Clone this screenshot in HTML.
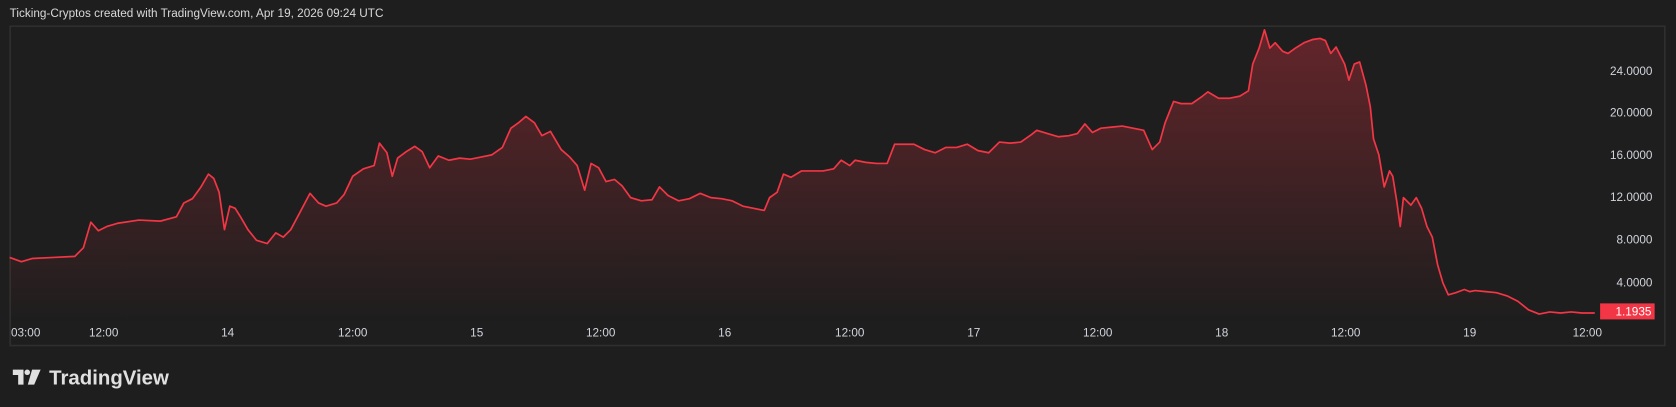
<!DOCTYPE html>
<html><head><meta charset="utf-8"><style>
html,body{margin:0;padding:0;background:#1e1e1e;overflow:hidden}
#w{width:1568px;height:381px;transform:scale(1.06888,1.06824);transform-origin:0 0;position:relative;font-family:"Liberation Sans",sans-serif;color:#d1d4dc}
.t{position:absolute;font-size:11px;color:#d9d9d9}
</style></head><body><div id="w">
<div class="t" style="left:9px;top:7px;font-size:11px">Ticking-Cryptos created with TradingView.com, Apr 19, 2026 09:24 UTC</div>
<svg width="1568" height="381" style="position:absolute;left:0;top:0">
<defs><linearGradient id="g" x1="0" y1="0" x2="0" y2="1"><stop offset="0" stop-color="#f23645" stop-opacity="0.33"/><stop offset="1" stop-color="#f23645" stop-opacity="0"/></linearGradient></defs>
<rect x="9.5" y="24.5" width="1548" height="299" fill="none" stroke="#2f2f2f" stroke-width="1.5"/>
<path id="p" fill="url(#g)" d="M9,241 L20,245 30,242 50,241 70,240 78,232 85,208 92,216 100,212 110,209 130,206 150,207 165,203 172,190 180,186 188,175 195,163 200,167 205,180 210,215 215,193 220,195 225,203 232,215 240,225 250,228 258,218 265,222 272,215 280,200 290,181 298,190 305,193 315,190 322,182 330,165 340,158 350,155 355,134 362,143 367,165 372,148 380,142 388,137 395,142 402,157 410,146 420,150 430,148 440,149 450,147 460,145 470,138 478,120 485,115 492,109 500,115 507,127 515,123 525,140 533,147 540,155 547,178 553,153 560,157 567,170 575,168 582,174 590,185 600,188 610,187 617,175 625,183 635,188 645,186 655,181 665,185 675,186 685,188 695,193 705,195 715,197 720,185 727,180 733,163 740,166 750,160 760,160 770,160 780,158 787,150 795,155 800,150 810,152 820,153 830,153 837,135 845,135 855,135 865,140 875,143 885,138 895,138 905,135 915,141 925,143 935,133 945,134 955,133 965,126 970,122 980,125 990,128 1000,127 1008,125 1015,116 1022,124 1030,120 1040,119 1050,118 1060,120 1070,122 1078,140 1085,133 1090,115 1098,95 1105,97 1115,97 1125,90 1130,86 1140,92 1150,92 1160,90 1168,85 1172,60 1178,45 1183,28 1188,45 1193,40 1200,48 1205,50 1212,45 1220,40 1228,37 1235,36 1240,38 1245,50 1250,44 1258,60 1262,75 1267,60 1272,58 1278,80 1282,100 1285,130 1290,145 1295,175 1300,160 1303,165 1307,190 1310,212 1313,185 1320,192 1325,185 1330,195 1335,212 1340,222 1345,248 1350,265 1355,276 1362,274 1370,271 1375,273 1380,272 1390,273 1400,274 1410,277 1420,282 1430,290 1440,294 1450,292 1460,293 1470,292 1480,293 1492,293 L1492,302 L9,302 Z"/>
<polyline fill="none" stroke="#f23645" stroke-width="1.6" stroke-linejoin="round" points="9,241 20,245 30,242 50,241 70,240 78,232 85,208 92,216 100,212 110,209 130,206 150,207 165,203 172,190 180,186 188,175 195,163 200,167 205,180 210,215 215,193 220,195 225,203 232,215 240,225 250,228 258,218 265,222 272,215 280,200 290,181 298,190 305,193 315,190 322,182 330,165 340,158 350,155 355,134 362,143 367,165 372,148 380,142 388,137 395,142 402,157 410,146 420,150 430,148 440,149 450,147 460,145 470,138 478,120 485,115 492,109 500,115 507,127 515,123 525,140 533,147 540,155 547,178 553,153 560,157 567,170 575,168 582,174 590,185 600,188 610,187 617,175 625,183 635,188 645,186 655,181 665,185 675,186 685,188 695,193 705,195 715,197 720,185 727,180 733,163 740,166 750,160 760,160 770,160 780,158 787,150 795,155 800,150 810,152 820,153 830,153 837,135 845,135 855,135 865,140 875,143 885,138 895,138 905,135 915,141 925,143 935,133 945,134 955,133 965,126 970,122 980,125 990,128 1000,127 1008,125 1015,116 1022,124 1030,120 1040,119 1050,118 1060,120 1070,122 1078,140 1085,133 1090,115 1098,95 1105,97 1115,97 1125,90 1130,86 1140,92 1150,92 1160,90 1168,85 1172,60 1178,45 1183,28 1188,45 1193,40 1200,48 1205,50 1212,45 1220,40 1228,37 1235,36 1240,38 1245,50 1250,44 1258,60 1262,75 1267,60 1272,58 1278,80 1282,100 1285,130 1290,145 1295,175 1300,160 1303,165 1307,190 1310,212 1313,185 1320,192 1325,185 1330,195 1335,212 1340,222 1345,248 1350,265 1355,276 1362,274 1370,271 1375,273 1380,272 1390,273 1400,274 1410,277 1420,282 1430,290 1440,294 1450,292 1460,293 1470,292 1480,293 1492,293"/>
<g font-family="Liberation Sans,sans-serif" font-size="11" fill="#d1d4dc" text-anchor="end">
<text x="1546" y="70">24.0000</text><text x="1546" y="109">20.0000</text><text x="1546" y="149">16.0000</text><text x="1546" y="188">12.0000</text><text x="1546" y="228">8.0000</text><text x="1546" y="268">4.0000</text>
</g>
<rect x="1497" y="284" width="51" height="15" fill="#f23645"/>
<text x="1545" y="295.5" font-family="Liberation Sans,sans-serif" font-size="11" fill="#fff" text-anchor="end">1.1935</text>
<g font-family="Liberation Sans,sans-serif" font-size="11" fill="#d1d4dc" text-anchor="middle">
<text x="24" y="315">03:00</text><text x="97" y="315">12:00</text><text x="213" y="315">14</text><text x="330" y="315">12:00</text><text x="446" y="315">15</text><text x="562" y="315">12:00</text><text x="678" y="315">16</text><text x="795" y="315">12:00</text><text x="911" y="315">17</text><text x="1027" y="315">12:00</text><text x="1143" y="315">18</text><text x="1259" y="315">12:00</text><text x="1375" y="315">19</text><text x="1485" y="315">12:00</text>
</g>
<g fill="#e0e0e0">
<path d="M12,346 H22 V360 H17 V351 H12 Z"/><circle cx="25.5" cy="348.5" r="2.6"/><path d="M30,346 H38 L32,360 H26 Z"/>
</g>
<text x="46" y="360" font-family="Liberation Sans,sans-serif" font-size="19" font-weight="bold" fill="#e0e0e0" textLength="112" lengthAdjust="spacingAndGlyphs">TradingView</text>
</svg>
</div></body></html>
